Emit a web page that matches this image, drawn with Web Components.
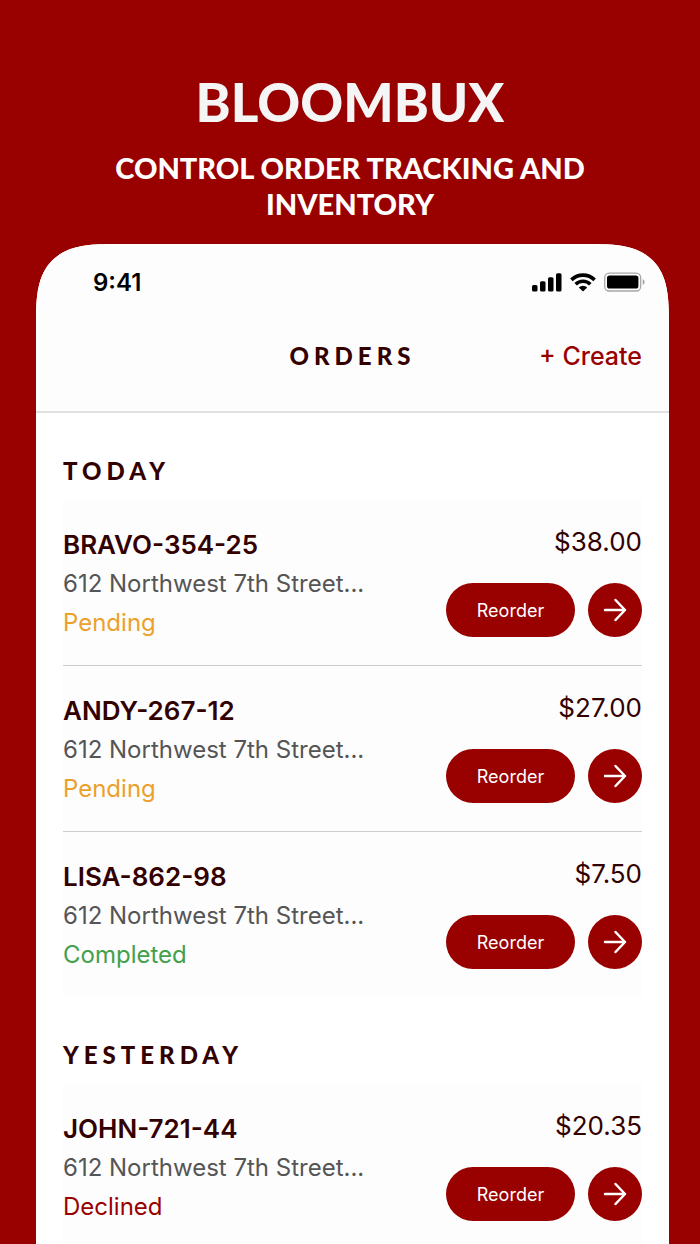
<!DOCTYPE html>
<html lang="en">
<head>
<meta charset="utf-8">
<meta name="viewport" content="width=device-width, initial-scale=1">
<title>Bloombux</title>
<style>
    html{
        --brand: #990000;
        --surface: #fdfdfd;
        --display: Lato, "Open Sans", sans-serif;
        background-color: #990000;
    }
    body{
        margin: 0;
        font-family: Inter, Roboto, sans-serif;
        font-size: 26px;
        color: #330000;
    }
</style>
</head>
<body>
<promo-banner>
    <span slot="brand">BLOOMBUX</span>
    <span slot="tagline">CONTROL ORDER TRACKING AND INVENTORY</span>
</promo-banner>
<phone-screen>
    <status-bar slot="top">9:41</status-bar>
    <page-header slot="top">ORDERS</page-header>
    <order-group heading="TODAY">
        <order-row code="BRAVO-354-25" price="$38.00" status="Pending">612 Northwest 7th Street...</order-row>
        <order-row code="ANDY-267-12" price="$27.00" status="Pending">612 Northwest 7th Street...</order-row>
        <order-row code="LISA-862-98" price="$7.50" status="Completed">612 Northwest 7th Street...</order-row>
    </order-group>
    <order-group heading="YESTERDAY">
        <order-row code="JOHN-721-44" price="$20.35" status="Declined">612 Northwest 7th Street...</order-row>
    </order-group>
</phone-screen>

<script>
class PromoBanner extends HTMLElement{
    constructor(){
        super();
        this.attachShadow({mode:'open'})
        this.shadowRoot.innerHTML=`
        <style>
        :host{
            display: block;
            padding: 68px 80px 22px;
            text-align: center;
            font-family: var(--display);
        }
        h1, p{
            margin: 0;
            font-weight: 900;
        }
        h1{
            color: #f5f5f5;
            font-size: 53px;
            line-height: 68px;
        }
        p{
            margin-top: 14px;
            color: #fff;
            font-size: 29px;
            line-height: 36px;
        }
        </style>
        <h1><slot name="brand"></slot></h1>
        <p><slot name="tagline"></slot></p>
        `
    }
}
customElements.define('promo-banner',PromoBanner);

class PhoneScreen extends HTMLElement{
    constructor(){
        super();
        this.attachShadow({mode:'open'})
        this.shadowRoot.innerHTML=`
        <style>
        :host{
            display: block;
            margin: 0 31px 0 36px;
            background-color: #fff;
            border-radius: 60px 60px 0 0;
            overflow: hidden;
        }
        @supports (corner-shape: squircle){
            :host{
                border-radius: 80px 80px 0 0;
                corner-shape: superellipse(1.6);
            }
        }
        header{
            background-color: var(--surface);
            border-bottom: 2px solid #e0e0e0;
        }
        main{
            padding: 0 27px;
        }
        </style>
        <header><slot name="top"></slot></header>
        <main><slot></slot></main>
        `
    }
}
customElements.define('phone-screen',PhoneScreen);

class StatusBar extends HTMLElement{
    constructor(){
        super();
        this.attachShadow({mode:'open'})
        this.shadowRoot.innerHTML=`
        <style>
        :host{
            display: flex;
            align-items: center;
            justify-content: space-between;
            padding: 20px 24px 0 57px;
            height: 36px;
            color: #000;
            font-size: 24px;
            font-weight: 600;
        }
        .icons{
            display: flex;
            align-items: center;
            gap: 8px;
        }
        svg{
            display: block;
        }
        </style>
        <span><slot></slot></span>
        <div class="icons">
            <svg width="30" height="20" viewBox="0 0 30 20">
                <rect x="0" y="13" width="5.500" height="6.500" rx="1.500"/>
                <rect x="8" y="9.300" width="5.500" height="10.200" rx="1.500"/>
                <rect x="16" y="5.300" width="5.500" height="14.200" rx="1.500"/>
                <rect x="24" y="1.300" width="5.500" height="18.200" rx="1.500"/>
            </svg>
            <svg width="26" height="20" viewBox="0 0 26 20" fill="none" stroke="#000" stroke-width="3.600">
                <path d="M1.400 7.900a16.500 16.500 0 0 1 23.200 0"/>
                <path d="M5.700 12.200a10.400 10.400 0 0 1 14.600 0"/>
                <path d="M8.800 15.400a6 6 0 0 1 8.400 0L13 19.600z" fill="#000" stroke="none"/>
            </svg>
            <svg width="41" height="20" viewBox="0 0 41 20">
                <rect x=".7" y="1.200" width="36" height="17.800" rx="4.500" fill="none" stroke="#a6a6a6" stroke-width="1.300"/>
                <rect x="3" y="3.600" width="31.400" height="13" rx="2.600"/>
                <path d="M38.700 7v6q2-.8 2-3t-2-3z" fill="#a6a6a6"/>
            </svg>
        </div>
        `
    }
}
customElements.define('status-bar',StatusBar);

class PageHeader extends HTMLElement{
    constructor(){
        super();
        this.attachShadow({mode:'open'})
        this.shadowRoot.innerHTML=`
        <style>
        :host{
            display: grid;
            grid-template-columns: 1fr auto 1fr;
            align-items: center;
            padding: 0 27px;
            height: 111px;
        }
        h2{
            grid-column: 2;
            margin: 0;
            font-family: var(--display);
            font-size: 24px;
            font-weight: 900;
            letter-spacing: 5px;
        }
        button{
            justify-self: end;
            padding: 0;
            border: 0;
            background: none;
            color: var(--brand);
            font: inherit;
            font-size: 25px;
            font-weight: 500;
            cursor: pointer;
        }
        </style>
        <h2><slot></slot></h2>
        <button type="button">+ Create</button>
        `
    }
}
customElements.define('page-header',PageHeader);

class OrderGroup extends HTMLElement{
    constructor(){
        super();
        this.attachShadow({mode:'open'})
        this.shadowRoot.innerHTML=`
        <style>
        :host{
            display: block;
        }
        h3{
            margin: 0;
            padding: 38px 0 10px;
            font-family: var(--display);
            font-size: 24px;
            font-weight: 900;
            line-height: 39px;
            letter-spacing: 5px;
        }
        .rows{
            background-color: var(--surface);
        }
        ::slotted(:not(:last-child)){
            border-bottom: 1px solid #ccc;
        }
        </style>
        <h3>${this.getAttribute('heading')}</h3>
        <div class="rows"><slot></slot></div>
        `
    }
}
customElements.define('order-group',OrderGroup);

class OrderRow extends HTMLElement{
    constructor(){
        super();
        const status=this.getAttribute('status')
        this.attachShadow({mode:'open'})
        this.shadowRoot.innerHTML=`
        <style>
        :host{
            display: flex;
            justify-content: space-between;
            padding: 25px 0 23px;
        }
        .info{
            line-height: 39px;
        }
        h4, p{
            margin: 0;
            font-size: 26px;
        }
        h4{
            font-weight: 600;
        }
        .address, .status{
            font-size: 24px;
        }
        .address{
            color: #555;
        }
        .pending{
            color: #eba12b;
        }
        .completed{
            color: #43a04b;
        }
        .declined{
            color: var(--brand);
        }
        .side{
            display: flex;
            flex-direction: column;
            align-items: flex-end;
            gap: 24px;
        }
        .price{
            line-height: 34px;
        }
        .actions{
            display: flex;
            gap: 13px;
        }
        button{
            display: flex;
            align-items: center;
            justify-content: center;
            height: 54px;
            padding: 0;
            border: 0;
            border-radius: 27px;
            background-color: var(--brand);
            color: #fff;
            font: inherit;
            font-size: 18px;
            cursor: pointer;
        }
        .reorder{
            width: 129px;
        }
        .open{
            width: 54px;
        }
        </style>
        <div class="info">
            <h4>${this.getAttribute('code')}</h4>
            <p class="address"><slot></slot></p>
            <p class="status ${status.toLowerCase()}">${status}</p>
        </div>
        <div class="side">
            <p class="price">${this.getAttribute('price')}</p>
            <div class="actions">
                <button type="button" class="reorder">Reorder</button>
                <button type="button" class="open" aria-label="Open order">
                    <svg width="24" height="24" viewBox="0 0 24 24" fill="none" stroke="#fff" stroke-width="2.500" stroke-linecap="round" stroke-linejoin="round">
                        <path d="M2 12h20M12.500 2L22 12l-9.500 10"/>
                    </svg>
                </button>
            </div>
        </div>
        `
    }
}
customElements.define('order-row',OrderRow);
</script>
</body>
</html>
